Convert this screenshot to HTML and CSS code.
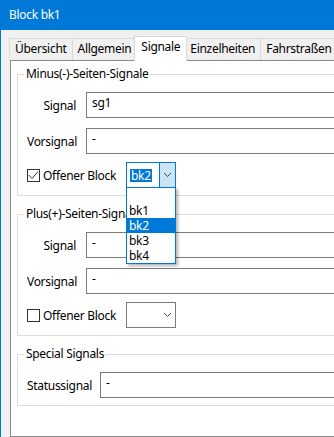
FILE: index.html
```html
<!DOCTYPE html>
<html lang="de">
<head>
    <meta charset="UTF-8">
    <title>Block bk1</title>
    <link rel="stylesheet" href="styles.css">
</head>
<body>
    <div class="window">
        <div class="titlebar">Block bk1</div>
        <div class="tabs">
            <div class="tab">Übersicht</div>
            <div class="tab">Allgemein</div>
            <div class="tab active">Signale</div>
            <div class="tab">Einzelheiten</div>
            <div class="tab">Fahrstraßen</div>
        </div>
        <div class="page">
            <!-- Minus side -->
            <fieldset class="group">
                <legend>Minus(-)-Seiten-Signale</legend>
                <div class="form">
                    <span class="lbl">Signal</span>
                    <div class="textbox">sg1</div>
                    <span class="lbl">Vorsignal</span>
                    <div class="textbox">-</div>
                    <div class="check-row">
                        <span class="checkbox">
                            <svg width="11" height="11" viewBox="0 0 11 11"><polyline points="0.8,5 4,8.5 10,1.5" fill="none" stroke="#333" stroke-width="1"/></svg>
                        </span>
                        <span class="check-text">Offener Block</span>
                        <div class="combo focused">
                            <span class="combo-text"><span class="sel">bk2</span></span>
                            <span class="combo-btn">
                                <svg width="9" height="6" viewBox="0 0 9 6"><polyline points="1,1 4.5,4.5 8,1" fill="none" stroke="#444" stroke-width="1"/></svg>
                            </span>
                            <ul class="dropdown">
                                <li>&nbsp;</li>
                                <li>bk1</li>
                                <li class="hover">bk2</li>
                                <li>bk3</li>
                                <li>bk4</li>
                            </ul>
                        </div>
                    </div>
                </div>
            </fieldset>

            <!-- Plus side -->
            <fieldset class="group">
                <legend>Plus(+)-Seiten-Signale</legend>
                <div class="form">
                    <span class="lbl">Signal</span>
                    <div class="textbox">-</div>
                    <span class="lbl">Vorsignal</span>
                    <div class="textbox">-</div>
                    <div class="check-row">
                        <span class="checkbox"></span>
                        <span class="check-text">Offener Block</span>
                        <div class="combo">
                            <span class="combo-text"></span>
                            <span class="combo-btn">
                                <svg width="9" height="6" viewBox="0 0 9 6"><polyline points="1,1 4.5,4.5 8,1" fill="none" stroke="#444" stroke-width="1"/></svg>
                            </span>
                        </div>
                    </div>
                </div>
            </fieldset>

            <!-- Special -->
            <fieldset class="group">
                <legend>Special Signals</legend>
                <div class="form wide">
                    <span class="lbl">Statussignal</span>
                    <div class="textbox">-</div>
                </div>
            </fieldset>
        </div>
    </div>
</body>
</html>
```

FILE: styles.css
```css
body {
    margin: 0;
    font-family: "Noto Sans", sans-serif;
    font-size: 12px;
    letter-spacing: -0.3px;
    color: #000;
    background-color: #f0f0f0;
    overflow: hidden;
}
.window {
    width: 420px;
    height: 437px;
    border-left: 1px solid #0078d7;
    background-color: #f0f0f0;
    display: flex;
    flex-direction: column;
}
.titlebar {
    flex: none;
    height: 30px;
    line-height: 30px;
    padding-left: 8px;
    background-color: #0078d7;
    color: white;
}
.tabs {
    flex: none;
    display: flex;
    align-items: flex-end;
    height: 24px;
    padding: 6px 0 0 8px;
}
.tab {
    box-sizing: border-box;
    height: 22px;
    line-height: 20px;
    padding: 0 5px;
    margin-right: -1px;
    border: 1px solid #d9d9d9;
    border-bottom: none;
    background-color: #f0f0f0;
    white-space: nowrap;
}
.tab.active {
    position: relative;
    z-index: 1;
    height: 25px;
    line-height: 20px;
    padding: 0 6px;
    margin: 0 -3px -1px -2px;
    background-color: white;
}
.page {
    flex: 1;
    margin-left: 9px;
    padding: 5px 0 0 6px;
    border: 1px solid #898989;
    background-color: white;
}
.group {
    width: 360px;
    margin: 0;
    padding: 10px 0 7px 9px;
    border: 1px solid #dcdcdc;
    min-width: 0;
}
.group + .group {
    margin-top: 10px;
}
.group legend {
    margin-left: -3px;
    padding: 0 1px 0 2px;
    line-height: 16px;
}
.form {
    display: grid;
    grid-template-columns: 49px 1fr;
    column-gap: 10px;
    row-gap: 10px;
    align-items: center;
}
.form.wide {
    grid-template-columns: 63px 1fr;
}
.lbl {
    text-align: right;
    white-space: nowrap;
}
.textbox {
    box-sizing: border-box;
    height: 26px;
    padding: 2px 5px;
    line-height: 16px;
    border: 1px solid #7a7a7a;
    background-color: white;
}
.check-row {
    grid-column: 1 / -1;
    display: flex;
    align-items: center;
    margin-top: -2px;
}
.checkbox {
    box-sizing: border-box;
    width: 13px;
    height: 13px;
    margin-right: 3px;
    border: 1px solid #333;
    background-color: white;
    display: flex;
}
.check-text {
    width: 83px;
    white-space: nowrap;
}
.combo {
    position: relative;
    box-sizing: border-box;
    width: 50px;
    height: 26px;
    display: flex;
    border: 1px solid #7a7a7a;
    background-color: white;
}
.combo.focused {
    border-color: #0078d7;
}
.combo-text {
    flex: 1;
    display: flex;
    align-items: center;
    padding-left: 3px;
}
.sel {
    background-color: #0078d7;
    color: white;
    padding: 0 1px;
    line-height: 13px;
}
.combo-btn {
    box-sizing: border-box;
    width: 16px;
    display: flex;
    align-items: center;
    justify-content: center;
}
.combo.focused .combo-btn {
    background-color: #cce4f7;
    border-left: 1px solid #0078d7;
}
.dropdown {
    position: absolute;
    z-index: 5;
    left: -1px;
    top: 100%;
    box-sizing: border-box;
    width: 50px;
    margin: 0;
    padding: 0;
    list-style: none;
    border: 1px solid #0078d7;
    background-color: white;
    box-shadow: 2px 2px 3px rgba(0,0,0,0.3);
}
.dropdown li {
    height: 15px;
    line-height: 15px;
    padding-left: 2px;
}
.dropdown li.hover {
    background-color: #0078d7;
    color: white;
}
```
